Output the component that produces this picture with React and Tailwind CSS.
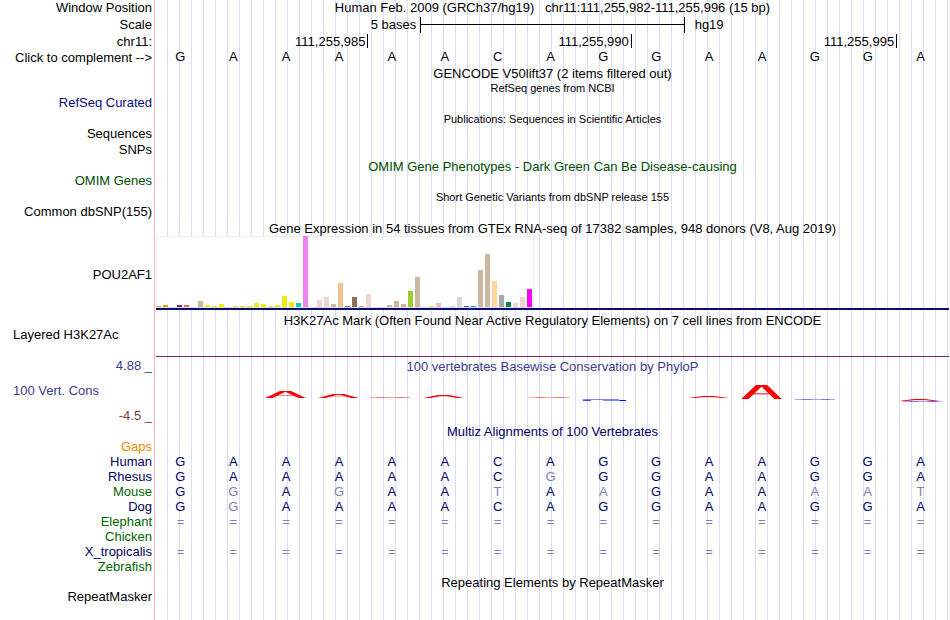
import React from "react";

const SEQUENCE = "GAAAAACAGGAAGGA";

// one bar per tissue: [height, colour]
const TISSUES = [
  [1, "#f4a460"], [2, "#ee9a00"], [0, "#8fbc8f"], [2, "#8b1c62"], [2, "#ee6a50"], [0, "#ff0000"],
  [6, "#cdb79e"], [2, "#eeee00"], [1, "#eeee00"], [3, "#eeee00"], [0, "#eeee00"], [1, "#eeee00"],
  [1, "#eeee00"], [1, "#eeee00"], [4, "#eeee00"], [3, "#eeee00"], [1, "#eeee00"], [2, "#eeee00"],
  [11, "#eeee00"], [5, "#eeee00"], [4, "#00cdcd"], [71, "#ee82ee"], [0, "#9ac0cd"], [7, "#eed5d2"],
  [10, "#eed5d2"], [3, "#cdb79e"], [24, "#eec591"], [1, "#8b7355"], [10, "#8b7355"], [1, "#cdaa7d"],
  [13, "#eed5d2"], [0, "#b452cd"], [0, "#7a378b"], [2, "#cdb79e"], [6, "#cdb79e"], [3, "#cdb79e"],
  [16, "#9acd32"], [30, "#cdb79e"], [0, "#7a67ee"], [1, "#ffd700"], [4, "#ffb6c1"], [0, "#cd9b1d"],
  [1, "#b4eeb4"], [10, "#d9d9d9"], [1, "#3a5fcd"], [1, "#1e90ff"], [37, "#cdb79e"], [53, "#cdb79e"],
  [26, "#ffd39b"], [12, "#a6a6a6"], [5, "#008b45"], [4, "#eed5d2"], [10, "#eed5d2"], [18, "#ff00ff"],
];

const NAVY = "text-[#000064]";
const GREEN = "text-[#006400]";

const SPECIES = [
  { name: "Gaps", color: "text-[#e68a00]", bases: "" },
  { name: "Human", color: NAVY, bases: "GAAAAACAGGAAGGA" },
  { name: "Rhesus", color: NAVY, bases: "GAAAAACGGGAAGGA" },
  { name: "Mouse", color: GREEN, bases: "GGAGAATAAGAAAAT" },
  { name: "Dog", color: NAVY, bases: "GGAAAACAGGAAGGA" },
  { name: "Elephant", color: GREEN, bases: "===============" },
  { name: "Chicken", color: GREEN, bases: "" },
  { name: "X_tropicalis", color: NAVY, bases: "===============" },
  { name: "Zebrafish", color: GREEN, bases: "" },
];

// conservation score marks, keyed by base index
const SCORES = {
  2: [{ type: "peak", y: 11, h: 7 }],
  3: [{ type: "peak", y: 14, h: 4 }],
  4: [{ type: "flat", x: 3, y: 17, h: 1, color: "#ff0000" }],
  5: [{ type: "peak", y: 15, h: 3 }],
  7: [{ type: "flat", x: 3, y: 17, h: 1, color: "#ff0000" }],
  8: [{ type: "dip", x: 4, y: 19 }],
  10: [{ type: "peak", y: 16, h: 2 }],
  11: [{ type: "peak", y: 5, h: 14 }],
  12: [{ type: "flat", x: 5, y: 19, h: 1, color: "#0000dd" }],
  14: [
    { type: "peak", y: 19, h: 2 },
    { type: "flat", x: 6, y: 21, h: 1, color: "#0000ff" },
  ],
};

// track titles sit low in their row, track labels sit high
const TITLE = "pt-0.5 leading-[14px]";
const BODY = "pb-0.5 leading-[13px]";

const Row = ({ label, color = "text-black", className = "leading-4", children }) => (
  <div className={`flex ${className}`}>
    <div className={`w-[156px] shrink-0 pr-1 text-right ${color}`}>{label}</div>
    <div className="min-w-0 flex-1 text-center">{children}</div>
  </div>
);

const ScoreMark = ({ mark }) => {
  if (mark.type === "peak") {
    return (
      <svg x="3" y={mark.y} width="41" height={mark.h} viewBox="0 0 40 14" preserveAspectRatio="none">
        <polyline points="1.3,16.4 20,-1.8 38.7,16.4" fill="none" stroke="#ff0000" strokeWidth="5" />
        <line x1="11" y1="8.8" x2="29" y2="8.8" stroke="#ff0000" strokeWidth="1.4" opacity="0.7" />
      </svg>
    );
  }
  if (mark.type === "dip") {
    return (
      <g fill="#0000ff">
        <rect x={mark.x} y={mark.y} width="36" height="1" opacity="0.5" />
        <rect x={mark.x} y={mark.y + 1} width="8" height="1" opacity="0.7" />
        <rect x={mark.x + 20} y={mark.y + 1} width="17" height="1" opacity="0.5" />
        <rect x={mark.x + 37} y={mark.y + 1} width="6" height="1" />
      </g>
    );
  }
  return (
    <g fill={mark.color}>
      <rect x={mark.x} y={mark.y} width="40" height={mark.h} opacity="0.35" />
      <rect x={mark.x + 7} y={mark.y} width="9" height={mark.h} opacity="0.3" />
      <rect x={mark.x + 26} y={mark.y} width="9" height={mark.h} opacity="0.3" />
    </g>
  );
};

const ExpressionChart = () => (
  <svg width="378" height="72" className="block" role="img" aria-label="Gene expression by tissue">
    <rect x="0.5" y="0.5" width="377" height="71" fill="#ffffff" stroke="#eeeeee" />
    <rect x="0" y="71" width="378" height="1" fill="#dcdcdc" />
    {TISSUES.map(([height, fill], i) => (
      <rect key={i} x={i * 7} y={71 - height} width="5" height={height} fill={fill} />
    ))}
  </svg>
);

const Alignment = () => (
  <table className="w-full table-fixed border-collapse leading-[15px]">
    <tbody>
      {SPECIES.map(({ name, color, bases }) => (
        <tr key={name}>
          <th scope="row" className={`w-[156px] p-0 pr-1 text-right font-normal ${color}`}>
            {name}
          </th>
          {[...SEQUENCE].map((ref, i) => (
            <td
              key={i}
              className={`p-0 pr-1 text-center ${bases[i] === ref ? "text-[#000064]" : "text-[#8080b4]"}`}
            >
              {bases[i]}
            </td>
          ))}
        </tr>
      ))}
    </tbody>
  </table>
);

const App = () => {
  return (
    <main className="min-h-screen bg-white bg-[linear-gradient(to_right,#fff_154px,#ffb4b4_154px,#ffb4b4_155px,#fff_155px,#fff_156px,transparent_156px),repeating-linear-gradient(to_right,transparent_0px,transparent_11px,#dcdcf8_11px,#dcdcf8_12px)] pr-px font-['Liberation_Sans',Arial,sans-serif] text-[13px] text-black">
      <Row label="Window Position">
        <h1 className="whitespace-pre">Human Feb. 2009 (GRCh37/hg19)   chr11:111,255,982-111,255,996 (15 bp)</h1>
      </Row>
      <Row label="Scale" className="leading-[18px]">
        <div className="grid grid-cols-3">
          <span className="pr-1 text-right">5 bases</span>
          <span className="flex items-center py-px">
            <span className="flex h-4 w-full items-start border-x border-black pt-[7px]">
              <span className="h-px w-full bg-black" />
            </span>
          </span>
          <span className="pl-2.5 text-left">hg19</span>
        </div>
      </Row>
      <Row label="chr11:">
        <div className="grid grid-cols-15 text-right">
          <span className="col-span-4 -mr-px h-3.5 border-r border-black pr-0.5">111,255,985</span>
          <span className="col-span-5 h-3.5 border-r border-black pr-0.5">111,255,990</span>
          <span className="col-span-5 -mr-px h-3.5 border-r border-black pr-0.5">111,255,995</span>
        </div>
      </Row>
      <Row label="Click to complement -->" className="leading-[15px]">
        <div className="grid grid-cols-15">
          {[...SEQUENCE].map((base, i) => (
            <span key={i} className="pr-1 leading-[13px]">{base}</span>
          ))}
        </div>
      </Row>

      <Row className={TITLE}>GENCODE V50lift37 (2 items filtered out)</Row>
      <Row className="text-[11px] leading-[14px]">RefSeq genes from NCBI</Row>
      <Row label="RefSeq Curated" color="text-[#0c0c78]" />
      <Row className="pt-0.5 text-[11px] leading-[13px]">Publications: Sequences in Scientific Articles</Row>
      <Row label="Sequences" />
      <Row label="SNPs" />
      <Row className={TITLE}>
        <span className="text-[#004c00]">OMIM Gene Phenotypes - Dark Green Can Be Disease-causing</span>
      </Row>
      <Row label="OMIM Genes" color="text-[#004c00]" className={BODY} />
      <Row className="text-[11px] leading-4">Short Genetic Variants from dbSNP release 155</Row>
      <Row label="Common dbSNP(155)" className={BODY} />

      <Row className={TITLE}>
        Gene Expression in 54 tissues from GTEx RNA-seq of 17382 samples, 948 donors (V8, Aug 2019)
      </Row>
      <Row label="POU2AF1" className="items-center leading-4">
        <ExpressionChart />
        <div className="mb-[3px] h-0.5 bg-[#0c0c78]" />
      </Row>

      <Row className="leading-[15px]">
        H3K27Ac Mark (Often Found Near Active Regulatory Elements) on 7 cell lines from ENCODE
      </Row>
      <div className="flex leading-[13px]">
        <div className="w-[156px] shrink-0 pl-[13px]">Layered H3K27Ac</div>
        <div className="mb-px h-[29px] flex-1 border-b border-[#78285a]" />
      </div>

      <div className="flex leading-4">
        <div className="flex w-[156px] shrink-0 flex-col gap-[9px] pr-1 pl-[13px] text-[#3c3c8c]">
          <span className="text-right">4.88 _</span>
          <span>100 Vert. Cons</span>
          <span className="text-right text-[#783c3c]">-4.5 _</span>
        </div>
        <div className="min-w-0 flex-1 text-center text-[#3c3c8c]">
          <div className={TITLE}>100 vertebrates Basewise Conservation by PhyloP</div>
          <div className="grid grid-cols-15 pt-1.5">
            {[...SEQUENCE].map((_, i) => (
              <svg key={i} width="50" height="28" viewBox="0 0 50 28" aria-hidden="true">
                {(SCORES[i] || []).map((mark, j) => (
                  <ScoreMark key={j} mark={mark} />
                ))}
              </svg>
            ))}
          </div>
        </div>
      </div>

      <Row className="leading-[15px]">
        <span className="text-[#000064]">Multiz Alignments of 100 Vertebrates</span>
      </Row>
      <Alignment />

      <Row className="pt-px leading-[15px]">Repeating Elements by RepeatMasker</Row>
      <Row label="RepeatMasker" className={BODY} />
    </main>
  );
};

export default App;
